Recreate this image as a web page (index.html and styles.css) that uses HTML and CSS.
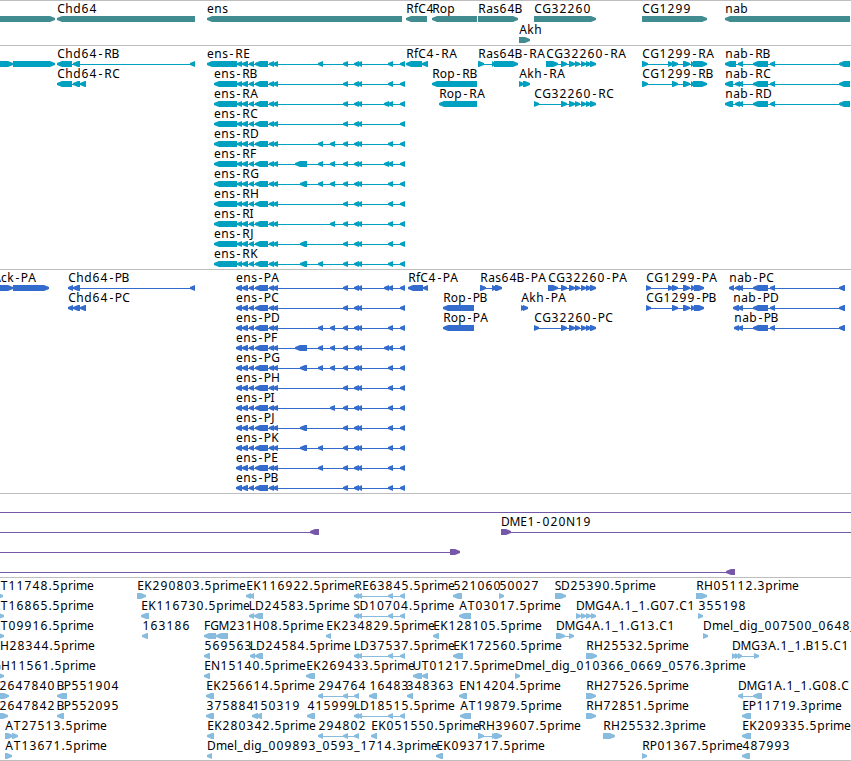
FILE: index.html
```
<!DOCTYPE html>
<html lang="en">
<head>
    <meta charset="UTF-8">
    <title>Genome Viewer</title>
    <link rel="stylesheet" href="styles.css">
</head>
<body>

<main class="viewer">
    <section class="track genes"><svg id="genes" width="851" height="44"></svg></section>
    <section class="track transcripts"><svg id="transcripts" width="851" height="223"></svg></section>
    <section class="track proteins"><svg id="proteins" width="851" height="223"></svg></section>
    <section class="track clones"><svg id="clones" width="851" height="83"></svg></section>
    <section class="track ests"><svg id="ests" width="851" height="182"></svg></section>
</main>

<script src="tracks.js"></script>
</body>
</html>
```

FILE: styles.css
```
body {
    margin: 0;
    background-color: white;
    overflow: hidden;
}

.viewer {
    display: flex;
    flex-direction: column;
    width: 851px;
    border-bottom: 1px solid #bebebe;
}

.track {
    border-top: 1px solid #bebebe;
}

.track svg {
    display: block;
    overflow: hidden;
}

.label {
    font-family: "Noto Sans", "DejaVu Sans", sans-serif;
    font-size: 12px;
    fill: black;
    text-anchor: middle;
}

.genes {
    color: #408c91;
}

.transcripts {
    color: #00a0c0;
}

.proteins {
    color: #336ccc;
}

.clones {
    color: #7558a8;
}

.ests {
    color: #88bcde;
}

.shape {
    fill: currentColor;
}
```

FILE: tracks.js
```
var NS = 'http://www.w3.org/2000/svg';

// advance of each character in pixels, 8 when not listed
var ADVANCE = {
    B: 7, D: 9, E: 7, F: 6, G: 9, H: 9, I: 3, J: 4, L: 6, M: 10, N: 9, P: 7, S: 6, T: 8,
    a: 7, c: 6, e: 7, f: 4, i: 3, k: 7, l: 3, m: 11, o: 7, r: 5, s: 6,
    '.': 4, '_': 6, '-': 7
};

function add(svg, tag, attrs) {
    var el = document.createElementNS(NS, tag);
    for (var key in attrs) {
        el.setAttribute(key, attrs[key]);
    }
    svg.appendChild(el);
    return el;
}

function drawLabel(svg, text, x, y) {
    var centers = [];
    for (var i = 0; i < text.length; i++) {
        var w = ADVANCE[text[i]] || 8;
        centers.push(x + w / 2);
        x += w;
    }
    add(svg, 'text', { class: 'label', x: centers.join(' '), y: y }).textContent = text;
}

function drawExon(svg, from, to, y, dir) {
    var head = Math.min(5, to - from);
    var tip = dir === '<' ? from : to;
    var tail = dir === '<' ? to : from;
    var neck = dir === '<' ? from + head : to - head;
    add(svg, 'path', {
        class: 'shape',
        d: 'M' + tail + ' ' + y + 'H' + neck + 'L' + tip + ' ' + (y + 2) + 'v2L' + neck + ' ' + (y + 6) + 'H' + tail + 'z'
    });
}

// feature: [row, name, x, direction, [start, end, start, end, ...]]
function drawTrack(id, features, pitch) {
    var svg = document.getElementById(id);
    features.forEach(function (f) {
        var y = 15 + f[0] * pitch;
        var e = f[4];
        if (e.length > 2) {
            add(svg, 'rect', { class: 'shape', x: e[0], y: y + 3, width: e[e.length - 1] - e[0], height: 1 });
        }
        for (var i = 0; i < e.length; i += 2) {
            if (e[i + 1] > e[i]) {
                drawExon(svg, e[i], e[i + 1], y, f[3]);
            }
        }
    });
    features.forEach(function (f) {
        if (f[1]) {
            drawLabel(svg, f[1], f[2], 12 + f[0] * pitch);
        }
    });
}

// ens isoforms share both ends and differ in the middle exons
function ens(row, name, x, first, middle, right) {
    var exons = first.concat([242, 248, 249, 254, 255, 268, 269, 274, 273, 278],
        middle, [343, 348, 354, 359, 358, 362], right, [400, 405]);
    return [row, name, x, '<', exons];
}

var A = [295, 307], B = [300, 307], C = [318, 323], D = [330, 335];
var R1 = [388, 393], R2 = [384, 389, 388, 393];
var long = [214, 237, 237, 242];
var short = [236, 242];
var cg = [561, 567, 569, 575, 575, 580, 581, 586, 586, 591, 590, 596];
var multi = [354, 359, 358, 362, 388, 393, 400, 405];
var triple = [318, 323, 343, 348, 354, 359];

drawTrack('genes', [
    [0, '', 0, '>', [-10, 55]],
    [0, 'Chd64', 57, '<', [57, 195]],
    [0, 'ens', 207, '<', [207, 402]],
    [0, 'RfC4', 406, '<', [406, 427]],
    [0, 'Rop', 432, '<', [432, 477]],
    [0, 'Ras64B', 478, '>', [478, 518]],
    [0, 'CG32260', 534, '>', [534, 596]],
    [0, 'CG1299', 642, '>', [642, 707]],
    [0, 'nab', 725, '<', [725, 850]],
    [1, 'Akh', 519, '>', [519, 530]]
], 21);

drawTrack('transcripts', [
    [0, '', 0, '>', [-8, 13, 13, 55]],
    [0, 'Chd64-RB', 57, '<', [57, 72, 73, 80, 190, 195]],
    [1, 'Chd64-RC', 57, '<', [57, 72, 73, 80, 80, 86]],
    ens(0, 'ens-RE', 207, [207, 237, 237, 242], C, R1),
    ens(1, 'ens-RB', 214, long, [], R1),
    ens(2, 'ens-RA', 214, long, [], R2),
    ens(3, 'ens-RC', 214, long, [], []),
    ens(4, 'ens-RD', 214, long, C.concat(D), R1),
    ens(5, 'ens-RF', 214, long, A.concat(C, D), R2),
    ens(6, 'ens-RG', 214, long, B.concat(C, D), R1),
    ens(7, 'ens-RH', 214, long, [], R1),
    ens(8, 'ens-RI', 214, long, D, R1),
    ens(9, 'ens-RJ', 214, long, B, R1),
    ens(10, 'ens-RK', 214, long, B.concat(C), R1),
    [0, 'RfC4-RA', 406, '<', [406, 422, 422, 428]],
    [1, 'Rop-RB', 432, '<', [432, 477]],
    [2, 'Rop-RA', 439, '<', [439, 477]],
    [0, 'Ras64B-RA', 478, '>', [478, 484, 492, 495, 494, 518]],
    [0, 'CG32260-RA', 546, '>', [546, 558].concat(cg)],
    [1, 'Akh-RA', 519, '>', [519, 524, 523, 530]],
    [2, 'CG32260-RC', 534, '>', [534, 539].concat(cg)],
    [0, 'CG1299-RA', 642, '>', [642, 648, 668, 673, 672, 678, 683, 690, 691, 694, 693, 707]],
    [1, 'CG1299-RB', 642, '>', [642, 648, 672, 678, 683, 690, 691, 694, 693, 707]],
    [0, 'nab-RB', 725, '<', [725, 736, 738, 743, 753, 768, 770, 775, 839, 850]],
    [1, 'nab-RC', 725, '<', [725, 733, 735, 740, 738, 743, 753, 768, 770, 775, 839, 850]],
    [2, 'nab-RD', 725, '<', [725, 733, 735, 740, 738, 743, 753, 768, 770, 775, 839, 850]]
], 20);

drawTrack('proteins', [
    [0, 'Ack-PA', -7, '>', [-8, 13, 13, 49]],
    [0, 'Chd64-PB', 68, '<', [68, 73, 73, 80, 190, 195]],
    [1, 'Chd64-PC', 68, '<', [68, 73, 73, 80, 80, 86]],
    ens(0, 'ens-PA', 236, short, [], R2),
    ens(1, 'ens-PC', 236, short, [], []),
    ens(2, 'ens-PD', 236, short, C.concat(D), R1),
    ens(3, 'ens-PF', 236, short, A.concat(C, D), R2),
    ens(4, 'ens-PG', 236, short, B.concat(C, D), R1),
    ens(5, 'ens-PH', 236, short, [], R1),
    ens(6, 'ens-PI', 236, short, D, R1),
    ens(7, 'ens-PJ', 236, short, B, R1),
    ens(8, 'ens-PK', 236, short, B.concat(C), R1),
    ens(9, 'ens-PE', 236, short, C, R1),
    ens(10, 'ens-PB', 236, short, [], R1),
    [0, 'RfC4-PA', 408, '<', [408, 423, 423, 428]],
    [1, 'Rop-PB', 443, '<', [443, 474]],
    [2, 'Rop-PA', 443, '<', [443, 474]],
    [0, 'Ras64B-PA', 480, '>', [480, 486, 492, 497, 495, 502]],
    [0, 'CG32260-PA', 548, '>', [548, 558].concat(cg)],
    [1, 'Akh-PA', 521, '>', [521, 525, 523, 528]],
    [2, 'CG32260-PC', 534, '>', [534, 539].concat(cg)],
    [0, 'CG1299-PA', 646, '>', [646, 651, 668, 673, 672, 678, 683, 690, 691, 695, 694, 704]],
    [1, 'CG1299-PB', 646, '>', [646, 651, 672, 678, 683, 690, 691, 695, 694, 704]],
    [0, 'nab-PC', 729, '<', [729, 734, 735, 740, 738, 743, 753, 768, 770, 775, 839, 845]],
    [1, 'nab-PD', 733, '<', [733, 739, 738, 743, 753, 768, 770, 775, 839, 845]],
    [2, 'nab-PB', 734, '<', [734, 739, 738, 743, 753, 768, 770, 775, 839, 845]]
], 20);

drawTrack('clones', [
    [0, '', 0, '>', [-20, -10, 860, 870]],
    [1, '', 0, '<', [-20, -10, 310, 319]],
    [1, 'DME1-020N19', 501, '>', [501, 511, 860, 870]],
    [2, '', 0, '>', [-20, -10, 450, 460]],
    [3, '', 0, '<', [-20, -10, 726, 735]]
], 20);

drawTrack('ests', [
    [0, 'AT11748.5prime', -8, '>', [-7, 3]],
    [0, 'EK290803.5prime', 137, '>', [137, 146]],
    [0, 'EK116922.5prime', 246, '<', [246, 251, 249, 254]],
    [0, 'RE63845.5prime', 354, '<', multi],
    [0, '521060', 453, '<', [453, 462]],
    [0, '50027', 499, '>', [499, 504]],
    [0, 'SD25390.5prime', 555, '>', [555, 566]],
    [0, 'RH05112.3prime', 696, '>', [696, 707]],

    [1, 'AT16865.5prime', -8, '>', [-7, 4]],
    [1, 'EK116730.5prime', 141, '<', [141, 149]],
    [1, 'LD24583.5prime', 249, '<', [249, 254, 254, 263]],
    [1, 'SD10704.5prime', 353.5, '<', multi],
    [1, 'AT03017.5prime', 459, '<', [459, 471]],
    [1, 'DMG4A.1_1.G07.C1', 576, '>', [576, 581, 581, 586, 586, 591, 591, 596]],
    [1, '355198', 698, '>', [698, 703]],

    [2, 'AT09916.5prime', -8, '>', [-7, 4]],
    [2, '163186', 142, '<', [142, 148]],
    [2, 'FGM231H08.5prime', 204, '<', [204, 216, 216, 228]],
    [2, 'EK234829.5prime', 326, '<', [326, 331]],
    [2, 'EK128105.5prime', 433, '<', [433, 439]],
    [2, 'DMG4A.1_1.G13.C1', 556, '>', [556, 565, 569, 574]],
    [2, 'Dmel_dig_007500_0648_', 703, '>', [703, 708]],

    [3, 'GH28344.5prime', -9, '>', [-7, 0]],
    [3, '569563', 204, '<', [204, 210]],
    [3, 'LD24584.5prime', 250, '<', [250, 255, 255, 263]],
    [3, 'LD37537.5prime', 354, '<', multi],
    [3, 'EK172560.5prime', 453, '<', [453, 463]],
    [3, 'RH25532.5prime', 586, '>', [586, 597]],
    [3, 'DMG3A.1_1.B15.C1', 732, '>', [732, 736, 735, 739, 738, 742, 754, 759]],

    [4, 'GH11561.5prime', -8, '>', [-7, 4]],
    [4, 'EN15140.5prime', 204, '<', [204, 210]],
    [4, 'EK269433.5prime', 306, '<', [306, 315]],
    [4, 'UT01217.5prime', 413, '<', [413, 422, 422, 428]],
    [4, 'Dmel_dig_010366_0669_0576.3prime', 515, '>', [515, 520]],

    [5, '2647840', -1, '>', [-7, 9]],
    [5, 'BP551904', 57, '<', [57, 67]],
    [5, 'EK256614.5prime', 206, '<', [206, 214]],
    [5, '294764', 318, '<', triple],
    [5, '16483', 369, '<', [369, 377]],
    [5, '348363', 406, '<', [407, 413]],
    [5, 'EN14204.5prime', 459, '<', [459, 467]],
    [5, 'RH27526.5prime', 586, '>', [586, 596]],
    [5, 'DMG1A.1_1.G08.C', 738, '<', [738, 743, 753, 762]],

    [6, '2647842', -1, '>', [-7, 8]],
    [6, 'BP552095', 57, '<', [57, 64]],
    [6, '375884', 206, '<', [206, 214]],
    [6, '150319', 252, '<', [252, 258, 256, 262]],
    [6, '415999', 307, '<', [307, 315]],
    [6, 'LD18515.5prime', 354, '<', multi],
    [6, 'AT19879.5prime', 460, '<', [460, 471]],
    [6, 'RH72851.5prime', 586, '>', [586, 596]],
    [6, 'EP11719.3prime', 742, '<', [742, 751]],

    [7, 'AT27513.5prime', 5, '>', [5, 13, 12, 18]],
    [7, 'EK280342.5prime', 207, '<', [207, 214]],
    [7, '294802', 318, '<', triple],
    [7, 'EK051550.5prime', 371, '<', [371, 377]],
    [7, 'RH39607.5prime', 478, '>', [478, 484, 492, 496, 494, 502]],
    [7, 'RH25532.3prime', 603, '>', [603, 615]],
    [7, 'EK209335.5prime', 742, '<', [742, 751]],

    [8, 'AT13671.5prime', 5, '>', [5, 12]],
    [8, 'Dmel_dig_009893_0593_1714.3prime', 207, '<', [207, 212]],
    [8, 'EK093717.5prime', 436, '<', [436, 443]],
    [8, 'RP01367.5prime', 642, '>', [642, 647]],
    [8, '487993', 742, '<', [742, 750]]
], 20);
```
